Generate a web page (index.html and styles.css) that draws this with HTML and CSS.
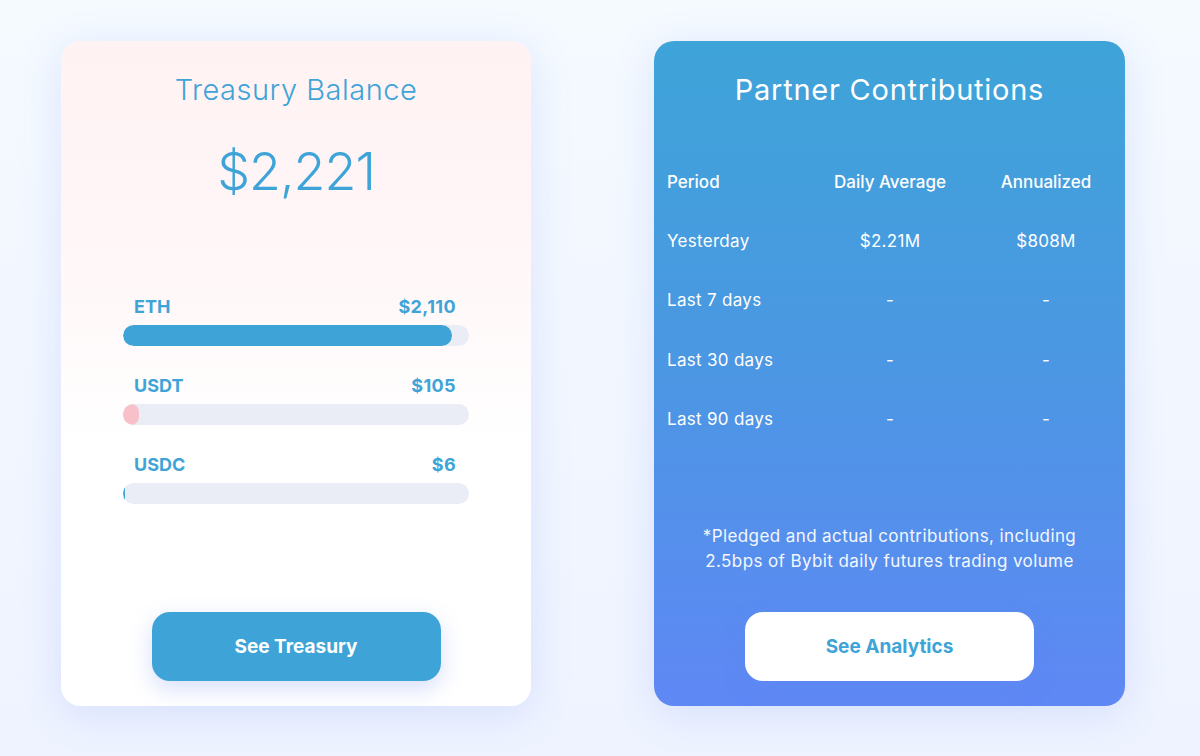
FILE: index.html
```html
<!DOCTYPE html>
<html lang="en">
<head>
<meta charset="utf-8">
<title>Treasury</title>
<link rel="stylesheet" href="styles.css">
</head>
<body>
<main class="cards">
  <section class="card treasury">
    <h2 class="treasury-title">Treasury Balance</h2>
    <div class="treasury-amount">$2,221</div>
    <div class="assets">
      <div class="asset">
        <div class="asset-row"><span>ETH</span><span>$2,110</span></div>
        <div class="track"><div class="fill fill-blue" style="width:95%"></div></div>
      </div>
      <div class="asset">
        <div class="asset-row"><span>USDT</span><span>$105</span></div>
        <div class="track"><div class="fill fill-pink" style="width:16px"></div></div>
      </div>
      <div class="asset">
        <div class="asset-row"><span>USDC</span><span>$6</span></div>
        <div class="track"><div class="fill fill-blue" style="width:2px"></div></div>
      </div>
    </div>
    <a class="btn btn-blue" href="#">See Treasury</a>
  </section>

  <section class="card partners">
    <h2 class="partners-title">Partner Contributions</h2>
    <div class="table">
      <div class="cell head first">Period</div>
      <div class="cell head">Daily Average</div>
      <div class="cell head">Annualized</div>

      <div class="cell first">Yesterday</div>
      <div class="cell">$2.21M</div>
      <div class="cell">$808M</div>

      <div class="cell first">Last 7 days</div>
      <div class="cell">-</div>
      <div class="cell">-</div>

      <div class="cell first">Last 30 days</div>
      <div class="cell">-</div>
      <div class="cell">-</div>

      <div class="cell first">Last 90 days</div>
      <div class="cell">-</div>
      <div class="cell">-</div>
    </div>
    <p class="note">*Pledged and actual contributions, including<br>2.5bps of Bybit daily futures trading volume</p>
    <a class="btn btn-white" href="#">See Analytics</a>
  </section>
</main>
</body>
</html>
```

FILE: styles.css
```css
* { box-sizing: border-box; }

html, body { height: 100%; }

body {
  margin: 0;
  font-family: "Inter", "Noto Sans", "DejaVu Sans", sans-serif;
  background: linear-gradient(180deg, #f5faff 0%, #eef3ff 100%);
  overflow: hidden;
}

.cards {
  display: flex;
  gap: 123px;
  padding: 41px 0 0 61px;
}

.card {
  width: 471px;
  height: 665px;
  border-radius: 20px;
  display: flex;
  flex-direction: column;
  box-shadow: 0 8px 40px rgba(110, 140, 245, 0.18);
}

.treasury {
  width: 470px;
  background: linear-gradient(180deg, #fff2f3 0%, #fff7f8 35%, #ffffff 60%, #ffffff 100%);
  align-items: center;
  padding: 0 62px 25px;
}

.treasury-title {
  margin: 31px 0 0;
  font-size: 29px;
  line-height: 36px;
  font-weight: 300;
  color: #3ea4d8;
  letter-spacing: 0.5px;
}

.treasury-amount {
  margin-top: 34px;
  font-size: 52px;
  line-height: 60px;
  font-weight: 300;
  color: #3ea4d8;
  letter-spacing: -1px;
}

.assets {
  width: 346px;
  margin-top: 94px;
  display: flex;
  flex-direction: column;
  gap: 29px;
}

.asset-row {
  display: flex;
  justify-content: space-between;
  padding: 0 13px;
  font-size: 18px;
  line-height: 22px;
  font-weight: 700;
  color: #3ea4d8;
}

.asset-row span:first-child { margin-left: -2px; }
.asset-row span:last-child { letter-spacing: 0.4px; }

.track {
  margin-top: 7px;
  height: 21px;
  border-radius: 11px;
  background: #eaedf5;
  overflow: hidden;
}

.fill {
  height: 100%;
  border-radius: 11px;
}

.fill-blue { background: #3ea4d8; }
.fill-pink { background: #f8c1c9; }

.btn {
  margin-top: auto;
  width: 289px;
  height: 69px;
  border-radius: 18px;
  display: flex;
  align-items: center;
  justify-content: center;
  font-size: 19px;
  font-weight: 700;
  text-decoration: none;
  box-shadow: 0 8px 22px rgba(100, 130, 240, 0.25);
}

.btn-blue { background: #3ea4d8; color: #ffffff; }
.btn-white { background: #ffffff; color: #3ea4d8; align-self: center; }

.partners {
  background: linear-gradient(180deg, #3ea4d8 0%, #4a98e2 45%, #5f88f5 100%);
  padding: 0 13px 25px;
  color: #ffffff;
}

.partners-title {
  margin: 30px 0 0;
  text-align: center;
  font-size: 29px;
  line-height: 37px;
  font-weight: 400;
  color: #ffffff;
  letter-spacing: 0.75px;
}

.table {
  margin-top: 44px;
  display: grid;
  grid-template-columns: 133px 180px 1fr;
  grid-auto-rows: 59.3px;
  align-items: center;
}

.cell {
  text-align: center;
  font-size: 17px;
  font-weight: 400;
  letter-spacing: 0.3px;
}

.cell.first { text-align: left; }
.cell.head { font-weight: 500; letter-spacing: 0; }

.note {
  margin: 76px 0 0;
  text-align: center;
  font-size: 17px;
  line-height: 25px;
  color: #f4f7ff;
  letter-spacing: 0.4px;
}
```
